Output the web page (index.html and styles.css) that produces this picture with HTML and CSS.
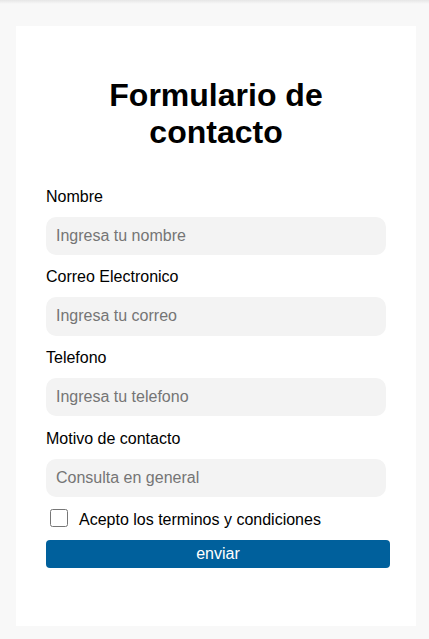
FILE: index.html
```html
<!DOCTYPE html>
<html lang="es">
<head>
<meta charset="utf-8">
<title>Formulario de contacto</title>
<link rel="stylesheet" href="styles.css">
</head>
<body>
<div class="topbar"></div>
<main class="page">
  <section class="card">
    <h1 class="title">Formulario de contacto</h1>
    <form class="form">
      <label class="label" for="nombre">Nombre</label>
      <input class="field" id="nombre" type="text" placeholder="Ingresa tu nombre">
      <label class="label" for="correo">Correo Electronico</label>
      <input class="field" id="correo" type="email" placeholder="Ingresa tu correo">
      <label class="label" for="telefono">Telefono</label>
      <input class="field" id="telefono" type="tel" placeholder="Ingresa tu telefono">
      <label class="label" for="motivo">Motivo de contacto</label>
      <input class="field" id="motivo" type="text" placeholder="Consulta en general">
      <div class="terms">
        <input class="check" id="terms" type="checkbox">
        <label class="terms-text" for="terms">Acepto los terminos y condiciones</label>
      </div>
      <button class="submit" type="button">enviar</button>
    </form>
  </section>
</main>
</body>
</html>
```
FILE: styles.css
```css
html, body {
  margin: 0;
  padding: 0;
  background: #f8f8f8;
  font-family: "Liberation Sans", Arial, sans-serif;
  color: #000;
}
.topbar {
  height: 4px;
  background: linear-gradient(#e6e6e6, #f8f8f8);
}
.page {
  padding: 22px 0 13px 16px;
}
.card {
  width: 400px;
  height: 600px;
  box-sizing: border-box;
  background: #fff;
  padding: 30px;
}
.title {
  font-size: 32px;
  font-weight: bold;
  text-align: center;
  margin: 21px 0 0;
  line-height: 36.8px;
}
.form {
  display: flex;
  flex-direction: column;
  padding-top: 23.5px;
}
.label {
  display: block;
  font-size: 16px;
  line-height: 18.4px;
  margin-top: 13.5px;
  margin-bottom: 10.5px;
}
.field {
  box-sizing: border-box;
  width: 340px;
  height: 38.4px;
  margin: 0;
  padding: 10px;
  border: none;
  border-radius: 10px;
  background: #f3f3f3;
  font-family: "Liberation Sans", Arial, sans-serif;
  font-size: 16px;
  color: #000;
  outline: none;
}
.field::placeholder {
  color: #757575;
}
.terms {
  display: flex;
  align-items: center;
  margin-top: 12px;
}
.check {
  width: 18px;
  height: 18px;
  margin: 0 11px 4px 4px;
  flex: none;
}
.terms-text {
  font-size: 16px;
  line-height: 18.4px;
}
.submit {
  box-sizing: border-box;
  width: 344px;
  height: 28px;
  margin-top: 9px;
  border: none;
  border-radius: 4px;
  background: #00609c;
  color: #fff;
  font-family: "Liberation Sans", Arial, sans-serif;
  font-size: 16px;
  padding: 0;
}
```
